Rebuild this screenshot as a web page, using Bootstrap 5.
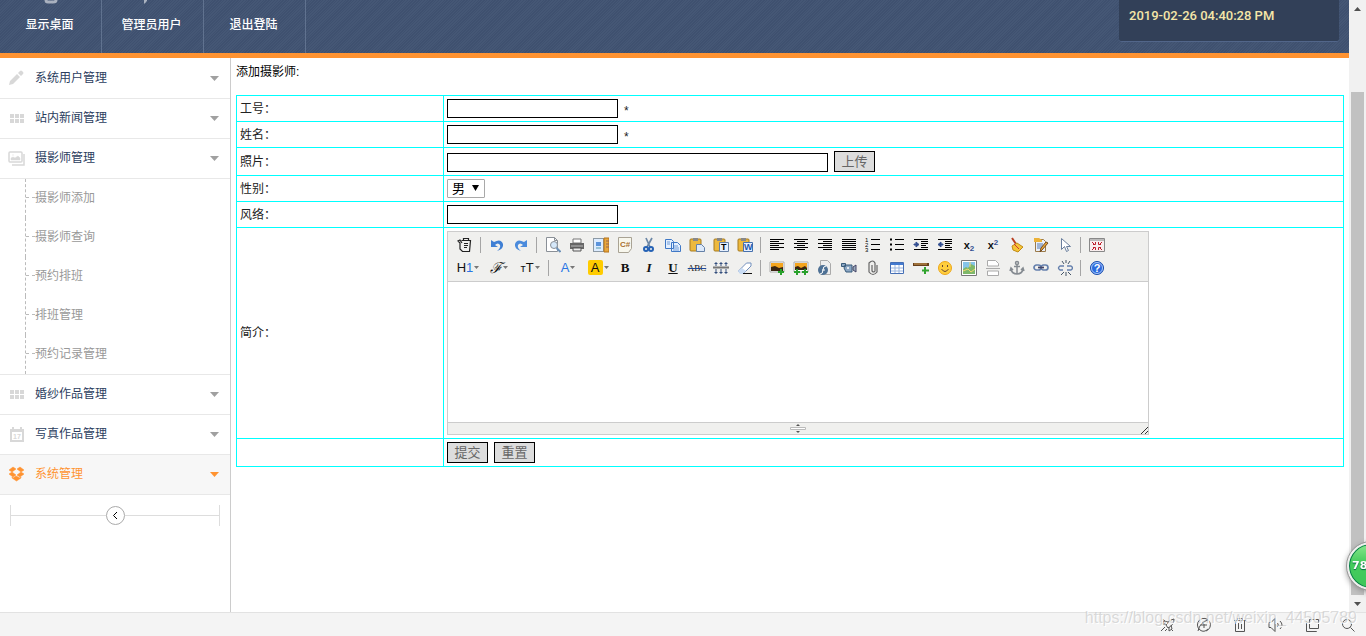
<!DOCTYPE html>
<html lang="zh-CN">
<head>
<meta charset="utf-8">
<meta name="viewport" content="width=device-width, initial-scale=1">
<title>添加摄影师</title>
<link href="https://cdn.jsdelivr.net/npm/bootstrap@5.3.0/dist/css/bootstrap.min.css" rel="stylesheet">
<style>
body{font:12px/18px "Liberation Sans","Noto Sans CJK SC",sans-serif;color:#000;background:#fff}
a{text-decoration:none}
svg{display:block;flex:none}
.topbar{height:58px;border-bottom:5px solid #ff9331;background:#455775 repeating-linear-gradient(135deg,rgba(20,35,70,.12) 0 1px,transparent 1px 2px)}
.topbar .top-link{width:102px;height:53px;color:#fff;border-right:1px solid #60728f;line-height:50px;font-weight:500;padding-right:2px}
.top-glyph{top:-13px;left:42px;opacity:.55}
.clock{width:220px;height:42px;margin-right:10px;padding:7px 10px;background:#324058;border-bottom:1px solid #52668a;border-radius:0 0 3px 3px;color:#f5e6a8;font:500 13px/18px Roboto,sans-serif}
.side{width:231px;border-right:1px solid #ccc;flex:none}
.side-link{height:40px;border-bottom:1px solid #e8e8e8;color:#2b3d5e;padding:0 11px 1px 8px}
.side>.side-link:first-child{height:41px}
.side-link .label{margin-left:10px}
.side-link .caret{color:#a0a0a0;margin-top:1px}
.side-link .pic{color:#d8d8d8}
.side-link.on{background:#f7f7f7;color:#ff9331}
.side-link.on .pic,.side-link.on .caret{color:#ff9331}
.subs{margin:0;padding-left:25px;border-bottom:1px solid #e8e8e8}
.subs a{height:39px;padding-bottom:2px;color:#999;border-left:1px dashed #bbb;display:flex;align-items:center}
.subs a::before{content:"";width:9px;border-top:1px dashed #bbb}
.fold{margin:10px 10px;height:21px;border:solid #ddd;border-width:0 1px}
.fold i{height:1px;background:#ddd}
.fold button{width:19px;height:19px;border:1px solid #aaa;border-radius:50%;background:#fff;padding:0}
.main{padding:5px 5px}
.form-grid{border-collapse:collapse;width:100%;margin-top:14px}
.form-grid td,.form-grid th{border:1px solid #0ff;padding:3px;font-weight:400;color:#222;line-height:18px}
.form-grid th{width:207px}
.box{height:19px;width:171px;border:1px solid #000;background:#fff;padding:0 2px}
.box.long{width:381px}
.req{line-height:20px;padding-top:2px;height:19px}
.push{height:21px;min-width:41px;border:1px solid #000;background:#ddd;color:#666;padding:0 6px;font-size:13px;line-height:19px}
.line{display:flex;gap:6px}
.pick{width:38px;height:19px;border:1px solid #a9a9a9;border-radius:1px;background:#fff;appearance:none;padding:0 4px;font-size:13px;line-height:17px;color:#000}
.pick-arrow{right:6px;top:6px;pointer-events:none}
.editor{width:702px;max-width:100%;border:1px solid #ccc}
.tools{background:#f0f0ee;border-bottom:1px solid #ccc;padding:1px 5px 2px}
.tools>div{height:23px;display:flex;align-items:center}
.tools button{width:24px;height:23px;border:0;background:none;padding:0;display:flex;align-items:center;justify-content:center;color:#111;line-height:16px}
.tools button.w30{width:30px;gap:1px}
.tools button.w32{width:32px;gap:1px}
.tools i{width:8px;height:16px;background:linear-gradient(#a5a5a5,#a5a5a5) 3px 0/1px 100% no-repeat}
.tools .sans{font-size:13px}
.tools .blue{color:#2976e5}
.tools .hl{background:#fc0;border-radius:2px;width:15px;height:15px;line-height:15px;font-size:13px}
.tools .serif{font:bold 13px/16px "Liberation Serif",serif}
.tools .script{font:italic 15px/16px "DejaVu Serif","Liberation Serif",serif}
.tools .abc{font:9px/14px "Liberation Serif",serif;text-decoration:line-through #1f4898}
.tools .bx{font:bold 11px/14px "Liberation Sans",sans-serif}
.tools .bx sub,.tools .bx sup{font-size:8px;color:#334f91}
svg text{font-family:"Liberation Sans",sans-serif;stroke:none}
.editor textarea{height:140px;border:0;padding:4px;resize:none;display:block;width:100%}
.status{height:12px;background:#f0f0ee;border-top:1px solid #ccc}
.rail{width:17px;background:#f1f1f1;flex:none}
.rail .arrow{height:17px}
.rail .gap{height:75px}
.rail .thumb{width:13px;background:#c1c1c1}
.bar{height:24px;background:#f4f4f4;border-top:1px solid #e2e2e2;gap:20px;padding:1px 10px 0 0}
.bar button{border:0;background:none;padding:0}
.wm{right:9px;bottom:9px;font-size:16px;line-height:18px;color:rgba(190,190,190,.55);text-shadow:1px 1px 0 #fff;pointer-events:none}
.ball{right:-29px;bottom:46px;width:48px;height:48px;border-radius:50%;background:linear-gradient(#8be78f,#45cc5d 42%,#3ec65a);border:2px solid #eee;outline:1px solid #999;box-shadow:inset 0 0 0 1px #087a4b,0 2px 6px #888;color:#fff;font:bold 11px/44px "DejaVu Sans",sans-serif;padding-left:3px;text-shadow:0 1px 1px #064}
</style>
<script src="https://cdn.jsdelivr.net/npm/bootstrap@5.3.0/dist/js/bootstrap.bundle.min.js"></script>
</head>
<body class="vh-100 overflow-hidden d-flex flex-column">
<div class="d-flex flex-grow-1 overflow-hidden">
<div class="flex-grow-1 d-flex flex-column overflow-hidden">
<header class="topbar d-flex justify-content-between overflow-hidden">
 <nav class="d-flex">
  <a class="top-link text-center position-relative" href="#">显示桌面<svg class="top-glyph position-absolute" width="18" height="18" fill="none" stroke="#fff" stroke-width="3"><path d="M4 4v9q0 2 2 2h5q3 0 3-2V4"/></svg></a>
  <a class="top-link text-center position-relative" href="#">管理员用户<svg class="top-glyph position-absolute" width="18" height="18" fill="#fff"><path d="M-4 2h7v12l-3 3zM0 13h2v3z"/></svg></a>
  <a class="top-link text-center" href="#">退出登陆</a>
 </nav>
 <div class="clock">2019-02-26 04:40:28 PM</div>
</header>
<div class="d-flex flex-grow-1">
<aside class="side">
 <a class="side-link d-flex align-items-center" href="#"><svg class="pic" width="17" height="16" fill="currentColor"><path d="M1 15l1-4 7-7 3 3-7 7zM10 3l2-2q1-1 2 0l1 1q1 1 0 2l-2 2z"/></svg><span class="label">系统用户管理</span><svg class="caret ms-auto" width="9" height="5" fill="currentColor"><path d="M0 0h9L4.500 5z"/></svg></a>
 <a class="side-link d-flex align-items-center" href="#"><svg class="pic" width="17" height="16" fill="currentColor"><path d="M2 4h4v4H2zm5 0h4v4H7zm5 0h4v4h-4zM2 9h4v4H2zm5 0h4v4H7zm5 0h4v4h-4z"/></svg><span class="label">站内新闻管理</span><svg class="caret ms-auto" width="9" height="5" fill="currentColor"><path d="M0 0h9L4.500 5z"/></svg></a>
 <a class="side-link d-flex align-items-center" href="#"><svg class="pic" width="17" height="16" fill="none" stroke="currentColor" stroke-width="1.500"><rect x="1" y="2" width="13" height="10" rx="1"/><path d="M4 15h12V4"/><path d="M3 10V8l2-1 2 1 3-2 2 2v2zM4 5h2" fill="currentColor" stroke-width=".5"/></svg><span class="label">摄影师管理</span><svg class="caret ms-auto" width="9" height="5" fill="currentColor"><path d="M0 0h9L4.500 5z"/></svg></a>
 <div class="subs"><a href="#">摄影师添加</a><a href="#">摄影师查询</a><a href="#">预约排班</a><a href="#">排班管理</a><a href="#">预约记录管理</a></div>
 <a class="side-link d-flex align-items-center" href="#"><svg class="pic" width="17" height="16" fill="currentColor"><path d="M2 4h4v4H2zm5 0h4v4H7zm5 0h4v4h-4zM2 9h4v4H2zm5 0h4v4H7zm5 0h4v4h-4z"/></svg><span class="label">婚纱作品管理</span><svg class="caret ms-auto" width="9" height="5" fill="currentColor"><path d="M0 0h9L4.500 5z"/></svg></a>
 <a class="side-link d-flex align-items-center" href="#"><svg class="pic" width="17" height="16" fill="none" stroke="currentColor"><path d="M3 5h12v10H3z" stroke-width="2"/><path d="M2 4h14M5 1v3M13 1v3" stroke-width="2"/><text x="5" y="13" font-size="7" font-weight="bold" fill="currentColor">17</text></svg><span class="label">写真作品管理</span><svg class="caret ms-auto" width="9" height="5" fill="currentColor"><path d="M0 0h9L4.500 5z"/></svg></a>
 <a class="side-link on d-flex align-items-center" href="#"><svg class="pic" width="17" height="16" fill="currentColor"><path d="M5 1l3 2-4 3-3-2zM12 1l4 3-3 2-4-3zM1 8l3-2 4 3-3 2zM16 8l-3-2-4 3 3 2zM4 11l1 1 3-2 4 2 1-1v1l-4.500 3L4 12z" stroke="currentColor" stroke-width=".5"/></svg><span class="label">系统管理</span><svg class="caret ms-auto" width="9" height="5" fill="currentColor"><path d="M0 0h9L4.500 5z"/></svg></a>
 <div class="fold d-flex align-items-center"><i class="flex-grow-1"></i><button type="button" aria-label="收起菜单"><svg width="17" height="17" fill="none" stroke="#000"><path d="M10 5L6.500 8.500 10 12"/></svg></button><i class="flex-grow-1"></i></div>
</aside>
<main class="main flex-grow-1">
<div>添加摄影师:</div>
<form>
<table class="form-grid">
<tr><th scope="row"><label for="no">工号：</label></th><td><div class="line"><input class="box" id="no" type="text"><span class="req">*</span></div></td></tr>
<tr><th scope="row"><label for="nm">姓名：</label></th><td><div class="line"><input class="box" id="nm" type="text"><span class="req">*</span></div></td></tr>
<tr><th scope="row"><label for="ph">照片：</label></th><td><div class="line align-items-end"><input class="box long" id="ph" type="text"><button class="push" type="button">上传</button></div></td></tr>
<tr><th scope="row"><label for="sx">性别：</label></th><td><div class="line"><div class="position-relative d-flex"><select class="pick" id="sx"><option>男</option><option>女</option></select><svg class="pick-arrow position-absolute" width="7" height="6"><path d="M0 0h7L3.500 6z"/></svg></div></div></td></tr>
<tr><th scope="row"><label for="st">风络：</label></th><td><div class="line"><input class="box" id="st" type="text"></div></td></tr>
<tr><th scope="row"><label for="intro">简介：</label></th><td>
<div class="editor">
<div class="tools">
<div>
<button type="button" title="HTML代码"><svg width="16" height="16" fill="none" stroke="#222" stroke-width="1.200"><path d="M4.500 3.500h9l-1 11h-7L3 12V6L1 4l2-1 2 3M6.500 3V1.500h5V3M7 6.500h4M7 8.500h4M7 10.500h3"/></svg></button><i></i>
<button type="button" title="后退"><svg width="16" height="16"><path d="M2 3v7h7L6 8q3-3 5 0 1 3-3 6 7-2 6-7-2-6-9-2z" fill="#3f7fd4"/></svg></button>
<button type="button" title="前进"><svg width="16" height="16"><path d="M14 3v7H7l3-2Q7 5 5 8q-1 3 3 6-7-2-6-7 2-6 9-2z" fill="#4b8bdc"/></svg></button><i></i>
<button type="button" title="预览"><svg width="16" height="16" fill="#fff" stroke="#8a9097"><path d="M1.500.5h8l3 3v11h-11zM9.500.5v3h3"/><circle cx="9" cy="8" r="3.500" fill="#d5e8fa"/><path d="M11.500 11l4 4" stroke="#6d91b8" stroke-width="2"/></svg></button>
<button type="button" title="打印"><svg width="16" height="16"><path d="M4 2h8v4H4z" fill="#fff" stroke="#777"/><path d="M1 6h14v6H1z" fill="#666"/><path d="M2 9h12" stroke="#bbb"/><path d="M4 11h8v3H4z" fill="#eee" stroke="#555"/></svg></button>
<button type="button" title="模板"><svg width="16" height="16"><path d="M.5 1.500h10v13H.5z" fill="#dcecff" stroke="#345" stroke-dasharray="1 1"/><path d="M3 5h5v4H3z" fill="#5a93dc"/><path d="M3 11h5" stroke="#59a"/><path d="M11 1h5v14h-5z" fill="#e7a63d" stroke="#b4721a"/><path d="M13 4h3M13 7h3M13 10h3" stroke="#965"/></svg></button>
<button type="button" title="插入程序代码"><svg width="16" height="16"><path d="M1.500.5h13v11l-3 4h-10z" fill="#f8f7ed" stroke="#a9a394"/><text x="3" y="10" font-size="8" font-weight="bold" fill="#a8702c">C#</text></svg></button>
<button type="button" title="剪切"><svg width="16" height="16" fill="none"><path d="M5 1l4 9M11 1L6 10" stroke="#6c87a6" stroke-width="1.700"/><circle cx="5" cy="12" r="2" stroke="#2562b5" stroke-width="2"/><circle cx="10" cy="12" r="2" stroke="#2562b5" stroke-width="2"/></svg></button>
<button type="button" title="复制"><svg width="16" height="16" fill="#e4f0ff" stroke="#3f78c6"><path d="M.5 2.500h6l2 2v7h-8zM6.500 5.500h6l3 3v6h-9z"/><path d="M2 5h3M2 7h3M8 9h5M8 11h6M8 13h6" stroke-width=".7"/></svg></button>
<button type="button" title="粘贴"><svg width="16" height="16"><rect x="1" y="2" width="11" height="12" rx="1" fill="#edb93d" stroke="#a67b20"/><path d="M4 1h5v3H4z" fill="#888"/><path d="M7.500 7.500h5l3 3v4h-8z" fill="#dce9fa" stroke="#6581a7"/></svg></button>
<button type="button" title="粘贴为无格式文本"><svg width="16" height="16"><rect x="1" y="2" width="11" height="12" rx="1" fill="#edb93d" stroke="#a67b20"/><path d="M4 1h5v3H4z" fill="#888"/><path d="M6.500 5.500h9v9h-9z" fill="#e6f0ff" stroke="#6581a7"/><text x="8" y="13" font-size="9" font-weight="bold">T</text></svg></button>
<button type="button" title="从Word粘贴"><svg width="16" height="16"><rect x="1" y="2" width="11" height="12" rx="1" fill="#edb93d" stroke="#a67b20"/><path d="M4 1h5v3H4z" fill="#888"/><path d="M6.500 5.500h9v9h-9z" fill="#e6f0ff" stroke="#4671ae"/><text x="7" y="13" font-size="9" font-weight="bold" fill="#235ab0">W</text></svg></button><i></i>
<button type="button" title="左对齐"><svg width="16" height="16" stroke="#000"><path d="M1 2.500h14M1 4.500h9M1 6.500h14M1 8.500h9M1 10.500h14M1 12.500h9"/></svg></button>
<button type="button" title="居中"><svg width="16" height="16" stroke="#000"><path d="M1 2.500h14M4 4.500h8M1 6.500h14M4 8.500h8M1 10.500h14M4 12.500h8"/></svg></button>
<button type="button" title="右对齐"><svg width="16" height="16" stroke="#000"><path d="M1 2.500h14M6 4.500h9M1 6.500h14M6 8.500h9M1 10.500h14M6 12.500h9"/></svg></button>
<button type="button" title="两端对齐"><svg width="16" height="16" stroke="#000"><path d="M1 2.500h14M1 4.500h14M1 6.500h14M1 8.500h14M1 10.500h14M1 12.500h14"/></svg></button>
<button type="button" title="编号"><svg width="16" height="16" stroke="#000"><path d="M6 2.500h9M6 7.500h9M6 12.500h9"/><g font-size="6"><text x="0" y="5">1</text><text x="0" y="10">2</text><text x="0" y="15">3</text></g></svg></button>
<button type="button" title="项目符号"><svg width="16" height="16" stroke="#000"><path d="M6 2.500h9M6 7.500h9M6 12.500h9"/><path d="M1 2.500h2M1 7.500h2M1 12.500h2" stroke-width="2"/></svg></button>
<button type="button" title="增加缩进"><svg width="16" height="16" stroke="#000"><path d="M1 2.500h14M8 4.500h7M8 6.500h7M8 8.500h5M8 10.500h7M1 12.500h14"/><path d="M1 7h2V5l3 2.500L3 10V8H1z" fill="#334f91" stroke="#334f91"/></svg></button>
<button type="button" title="减少缩进"><svg width="16" height="16" stroke="#000"><path d="M1 2.500h14M8 4.500h7M8 6.500h7M8 8.500h5M8 10.500h7M1 12.500h14"/><path d="M6 7H4V5L1 7.500 4 10V8h2z" fill="#334f91" stroke="#334f91"/></svg></button>
<button type="button" title="下标"><span class="bx">x<sub>2</sub></span></button>
<button type="button" title="上标"><span class="bx">x<sup>2</sup></span></button>
<button type="button" title="清理HTML代码"><svg width="16" height="16"><path d="M3 1l4 6" stroke="#b93f20" stroke-width="2"/><path d="M3 9l5-3 6 4-5 5-5-2z" fill="#f5c436" stroke="#c18b16"/><path d="M5 7l5 5" stroke="#c33"/></svg></button>
<button type="button" title="一键排版"><svg width="16" height="16"><path d="M2.500 2.500h8l2 2v10h-10z" fill="#e9f0fb" stroke="#9b7a4a"/><path d="M1 1h5l3 2v2H1z" fill="#ecb237"/><path d="M4 7h6M4 9h6M4 11h4" stroke="#5578ad"/><path d="M15 6l-6 7-2 2 1-4 5-6z" fill="#eba83a" stroke="#744c20"/></svg></button>
<button type="button" title="全选"><svg width="16" height="16"><path d="M4.500 1.500v11l3-3 2 5 2-1-2-4h4z" fill="#fff" stroke="#6a7e9d"/></svg></button><i></i>
<button type="button" title="全屏显示"><svg width="16" height="16"><path d="M.5 1.500h15v13H.5z" fill="#f9eeee" stroke="#888"/><path d="M1 3h14" stroke="#bbb" stroke-width="2"/><path d="M3 5l3 3M13 5l-3 3M3 13l3-3M13 13l-3-3M4 7.500h2.500V5M9.500 5v2.500H12M4 10.500h2.500V13M12 10.500H9.500V13" fill="none" stroke="#bd1f2c"/></svg></button>
</div>
<div>
<button class="w30" type="button" title="段落"><span class="sans">H<span class="blue">1</span></span><svg width="5" height="3" fill="#777"><path d="M0 0h5L2.500 3z"/></svg></button>
<button class="w32" type="button" title="字体"><span class="script">ℱ</span><svg width="5" height="3" fill="#777"><path d="M0 0h5L2.500 3z"/></svg></button>
<button class="w30" type="button" title="文字大小"><span class="sans"><small>т</small>T</span><svg width="5" height="3" fill="#777"><path d="M0 0h5L2.500 3z"/></svg></button><i></i>
<button class="w30" type="button" title="文字颜色"><span class="sans blue">A</span><svg width="5" height="3" fill="#777"><path d="M0 0h5L2.500 3z"/></svg></button>
<button class="w30" type="button" title="文字背景"><span class="hl">A</span><svg width="5" height="3" fill="#777"><path d="M0 0h5L2.500 3z"/></svg></button>
<button type="button" title="粗体"><span class="serif">B</span></button>
<button type="button" title="斜体"><span class="serif fst-italic">I</span></button>
<button type="button" title="下划线"><span class="serif text-decoration-underline">U</span></button>
<button type="button" title="删除线"><span class="abc">ABC</span></button>
<button type="button" title="行距"><svg width="16" height="16" fill="none"><path d="M0 7.500h16" stroke="#777" stroke-width="2"/><path d="M3 2v4M8 2v4M13 2v4M3 9v5M8 9v5M13 9v5M1.500 3.500h3M6.500 3.500h3M11.500 3.500h3M1.500 12.500h3M6.500 12.500h3M11.500 12.500h3" stroke="#344f7d"/></svg></button>
<button type="button" title="删除格式"><svg width="16" height="16"><path d="M1.500 11l8-8h4.500v3l-7 7H3z" fill="#fff" stroke="#718fbd"/><path d="M1 11l4-3 4 3-3 3H3z" fill="#c9dcf4"/><path d="M6 13.500h9" stroke="#111"/></svg></button><i></i>
<button type="button" title="图片"><svg width="16" height="16"><path d="M1 2h14v10H1z" fill="#fff" stroke="#aaa"/><path d="M2 3h12v8H2z" fill="#f5a51e"/><path d="M2 7l4-1 4 2 4-1v4H2z" fill="#3a2510"/><path d="M12 9v6M9 12h6" stroke="#29a12c" stroke-width="2"/></svg></button>
<button type="button" title="批量图片上传"><svg width="16" height="16"><path d="M1 2h14v10H1z" fill="#fff" stroke="#aaa"/><path d="M2 3h12v5H2z" fill="#f5a51e"/><path d="M2 7l3-1 3 2 4-2 2 2v2H2z" fill="#3a2510"/><path d="M4 9v6M1 12h6M12 9v6M9 12h6" stroke="#29a12c" stroke-width="2"/></svg></button>
<button type="button" title="Flash"><svg width="16" height="16"><path d="M3.500.5h7l3 3v11h-10z" fill="#eee" stroke="#aaa"/><circle cx="6" cy="10" r="5" fill="#4e7195"/><path d="M9 6q-3 0-3 4t-3 4M5 10h3" fill="none" stroke="#fff"/></svg></button>
<button type="button" title="视音频"><svg width="16" height="16"><path d="M.5 3.500h4v3h-4zM4 5h7v7H5L3 8z" fill="#8ba7c4" stroke="#385b7b"/><path d="M12 7l3-2v7l-3-2z" fill="#9ab" stroke="#446"/><circle cx="7" cy="8" r="1" fill="#fff"/></svg></button>
<button type="button" title="插入文件"><svg width="16" height="16" fill="none" stroke="#666" stroke-width="1.200"><path d="M12 5v7q-4 5-8 0V3q4-4 6 0v8q-1 2-3 0V5"/></svg></button>
<button type="button" title="表格"><svg width="16" height="16"><path d="M1.500 2.500h13v11h-13z" fill="#fff" stroke="#456fb5"/><path d="M2 3h12v2H2z" fill="#447bd0"/><path d="M2 8h12M2 11h12M6 5v8M10 5v8" stroke="#9bb6df"/></svg></button>
<button type="button" title="插入横线"><svg width="16" height="16"><path d="M0 3h16v3H0z" fill="#68401b"/><path d="M1 4h13" stroke="#d5a35d"/><path d="M12 7v7M9 10.500h7" stroke="#31a42e" stroke-width="2"/></svg></button>
<button type="button" title="插入表情"><svg width="16" height="16"><circle cx="8" cy="8" r="6.500" fill="#ffce3d" stroke="#eda719"/><path d="M5.500 5v2M10.500 5v2M4.500 9q3.500 5 7 0" fill="none" stroke="#643"/></svg></button>
<button type="button" title="百度地图"><svg width="16" height="16"><path d="M.5.500h15v15H.5z" fill="#fff" stroke="#777"/><path d="M2 2h12v12H2z" fill="#86c4e8"/><path d="M2 9l3-2 2 1 3-4 4 2v8H2z" fill="#7fb86a"/><path d="M2 11l5-2 3 3 4-3M9 2v5" stroke="#f3d66d" fill="none"/></svg></button>
<button type="button" title="插入分页符"><svg width="16" height="16" fill="#fff" stroke="#aaa"><path d="M2.500 6V.5h8l3 3V6zM2.500 15.500V11h11v4.500zM1 8.500h14"/></svg></button>
<button type="button" title="锚点"><svg width="16" height="16" fill="none" stroke="#858b91" stroke-width="1.500"><circle cx="8" cy="3" r="1.500"/><path d="M8 5v9M5 6.500h6M2 9q1 5 6 5t6-5M1 11l1-3 2 2M15 11l-1-3-2 2"/></svg></button>
<button type="button" title="超级链接"><svg width="16" height="16" fill="none" stroke="#6580ad" stroke-width="1.700"><rect x="1" y="5" width="7" height="5" rx="2.500"/><rect x="8" y="5" width="7" height="5" rx="2.500"/><path d="M5 7.500h6" stroke="#446"/></svg></button>
<button type="button" title="取消超级链接"><svg width="16" height="16" fill="none" stroke="#6580ad" stroke-width="1.500"><path d="M7 6H3q-3 2 0 4h3M10 6h4q3 2 0 4h-4"/><path d="M5 1l2 3M9 0v3M13 1l-2 3M4 15l3-3M9 12v4M11 12l3 3" stroke="#456" stroke-width="1"/></svg></button><i></i>
<button type="button" title="关于"><svg width="16" height="16" fill="none"><circle cx="8" cy="8" r="6.500" fill="#2c6bdd" stroke="#1b4daa"/><circle cx="8" cy="8" r="5.500" stroke="#a9c7f8"/><text x="8" y="12" text-anchor="middle" font-size="11" font-weight="bold" fill="#fff">?</text></svg></button>
</div>
</div>
<textarea id="intro"></textarea>
<div class="status d-flex justify-content-end position-relative"><svg class="position-absolute start-50 translate-middle-x" width="16" height="11"><path d="M6 3l2-2 2 2zM6 8h4l-2 2z" fill="#555"/><path d="M.5 4.500h15v2H.5z" fill="#fff" stroke="#bbb"/></svg><svg width="8" height="11" stroke="#333"><path d="M1 11l7-7M5 11l3-3"/></svg></div>
</div></td></tr>
<tr><th></th><td><div class="line"><button class="push" type="submit">提交</button><button class="push" type="reset">重置</button></div></td></tr>
</table>
</form>
</main>
</div>
</div>
<div class="rail d-flex flex-column align-items-center">
 <div class="arrow d-flex align-items-center"><svg width="7" height="4" fill="#505050"><path d="M0 4h7L3.500 0z"/></svg></div><div class="gap"></div><div class="thumb flex-grow-1"></div><div class="arrow d-flex align-items-center"><svg width="7" height="4" fill="#505050"><path d="M0 0h7L3.500 4z"/></svg></div>
</div>
</div>
<footer class="bar d-flex justify-content-end align-items-center position-relative">
<button type="button" aria-label="加速"><svg width="16" height="16" fill="none" stroke="#555"><path d="M14 2q-5 0-8 6l2 3q6-3 6-9zM6 7L2 7l2-3 4 1M9 10v4l3-2-1-4M5 10l-4 4M7 12l-2 2M2 2l3 2M13 14l-2-2"/></svg></button>
<button type="button" aria-label="下载"><svg width="16" height="16" fill="none" stroke="#555"><path d="M4 13a6.500 6.500 0 1 1 6 1M2 14q2-9 10-11M8 5v6M5 8h6M4 13q4 3 8-1"/></svg></button>
<button type="button" aria-label="清理"><svg width="16" height="16" fill="none" stroke="#555"><path d="M2 3.500h12M5.500 3V1.500h5V3M3.500 4v10.500h9V4M6.500 6v6M9.500 6v6"/></svg></button>
<button type="button" aria-label="声音"><svg width="16" height="16" fill="none" stroke="#555"><path d="M1 5.500h2l4-4v13l-4-4H1zM9.500 6q1.500 2 0 4M12 4q4 4 0 8"/></svg></button>
<button type="button" aria-label="窗口"><svg width="16" height="16" fill="none" stroke="#555"><path d="M5.500 2.500h9v9h-9zM3 4.500H2.500v10h10V14"/></svg></button>
<button type="button" aria-label="搜索"><svg width="16" height="16" fill="none" stroke="#555"><circle cx="7" cy="7" r="4.500"/><path d="M10.500 10.500l4 4"/></svg></button>
<div class="wm position-absolute">https://blog.csdn.net/weixin_44505789</div>
</footer>
<div class="ball position-fixed">78</div>
</body>
</html>
